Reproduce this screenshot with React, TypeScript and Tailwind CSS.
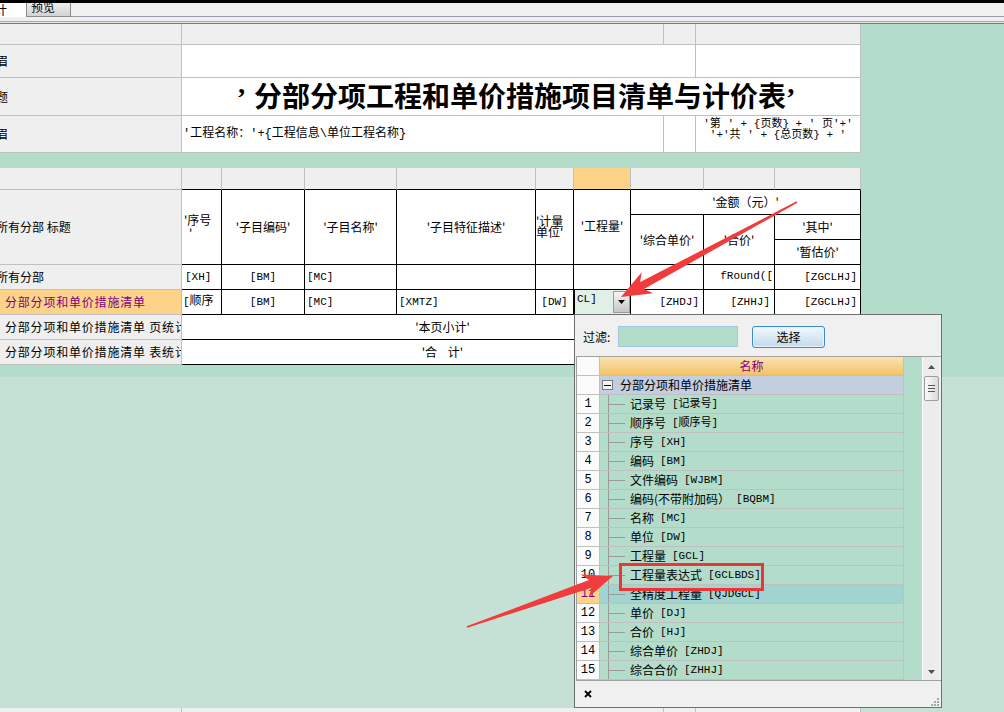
import React from "react";

const GL = "border-r border-b border-[#c0c0c0]";
const BL = "border-r border-b border-black";
const HC = "border-r border-b border-r-[#c0c0c0] border-b-black bg-[#efefef]";
const M = "font-['Liberation_Mono','Noto_Sans_CJK_SC',monospace] text-[11px]";

function arrow(tx: number, ty: number, px: number, py: number) {
  const dx = px - tx;
  const dy = py - ty;
  const L = Math.hypot(dx, dy);
  const ux = dx / L;
  const uy = dy / L;
  const nx = -uy;
  const ny = ux;
  const hl = 30;
  const hw = 12;
  const sw = 4;
  const tw = 0.8;
  const bx = px - ux * hl;
  const by = py - uy * hl;
  const p = (x: number, y: number) => `${x.toFixed(1)},${y.toFixed(1)}`;
  return [
    p(tx + nx * tw, ty + ny * tw),
    p(bx + ux * 6 + nx * sw, by + uy * 6 + ny * sw),
    p(bx + nx * hw, by + ny * hw),
    p(px, py),
    p(bx - nx * hw, by - ny * hw),
    p(bx + ux * 6 - nx * sw, by + uy * 6 - ny * sw),
    p(tx - nx * tw, ty - ny * tw),
  ].join(" ");
}

const items: [string, string][] = [
  ["记录号", "[记录号]"],
  ["顺序号", "[顺序号]"],
  ["序号", "[XH]"],
  ["编码", "[BM]"],
  ["文件编码", "[WJBM]"],
  ["编码(不带附加码）", "[BQBM]"],
  ["名称", "[MC]"],
  ["单位", "[DW]"],
  ["工程量", "[GCL]"],
  ["工程量表达式", "[GCLBDS]"],
  ["全精度工程量", "[QJDGCL]"],
  ["单价", "[DJ]"],
  ["合价", "[HJ]"],
  ["综合单价", "[ZHDJ]"],
  ["综合合价", "[ZHHJ]"],
];

function ListRow({ n, label, code }: { n: number; label: string; code: string }) {
  const sel = n === 11;
  return (
    <div className="h-[19px] flex shrink-0">
      <div
        className={`w-[23px] h-full ${GL} flex items-center justify-center ${M} text-[12px] ${
          sel ? "bg-[#fdd38a] text-[#800080]" : "bg-[#fbfbfb]"
        }`}
      >
        {n}
      </div>
      <div className={`w-[304px] h-full ${GL} flex items-center ${sel ? "bg-[#a1d3d1]" : "bg-[#b4dccb]"}`}>
        <div className="w-[8px] shrink-0" />
        <div className="w-px h-full bg-[#9a9a9a] shrink-0" />
        <div className="w-[16px] h-px bg-[#9a9a9a] shrink-0" />
        <span className="ml-[5px] whitespace-nowrap">{label}</span>
        <span className={`ml-[6px] whitespace-nowrap ${M}`}>{code}</span>
      </div>
    </div>
  );
}

export default function App() {
  return (
    <div className="relative w-[1004px] h-[712px] overflow-hidden bg-[#c5e1d5] font-['Noto_Sans_CJK_SC',sans-serif] text-[12px] leading-[14px] text-black flex flex-col">
      <div className="h-[3px] shrink-0 bg-black" />
      {/* tab strip */}
      <div className="h-[14px] shrink-0 flex bg-[#f0f0f0]">
        <div className="w-[26px] h-full bg-white overflow-hidden">
          <div className="-ml-[5px] leading-[13px]">计</div>
        </div>
        <div className="w-[45px] h-full border-x border-b border-[#8c8c8c] bg-linear-to-b from-[#efefef] to-[#d2d2d2] overflow-hidden pl-[4px]">
          <div className="-mt-[3px] leading-[14px]">预览</div>
        </div>
        <div className="flex-1 h-full border-b border-[#9c9cab]" />
      </div>
      <div className="h-[4px] shrink-0 bg-[#f0f0f0]" />
      <div className="h-px shrink-0 bg-[#a9a9a9]" />
      <div className="h-px shrink-0 bg-[#e6e6e6]" />
      <div className="h-px shrink-0 bg-[#7a7a7a]" />

      {/* design area */}
      <div className="h-[353px] shrink-0 bg-[#b4dccb] flex flex-col">
        {/* table 1 */}
        <div className="w-[861px] flex flex-col shrink-0">
          <div className="h-[21px] flex">
            <div className={`w-[182px] h-full ${GL} bg-[#efefef]`} />
            <div className={`w-[482px] h-full ${GL} bg-[#efefef]`} />
            <div className={`w-[32px] h-full ${GL} bg-[#efefef]`} />
            <div className={`w-[165px] h-full ${GL} bg-[#efefef]`} />
          </div>
          <div className="h-[33px] flex">
            <div className={`w-[182px] h-full ${GL} bg-[#efefef] flex items-center overflow-hidden`}>
              <span className="-ml-[16px] whitespace-nowrap">页眉</span>
            </div>
            <div className={`w-[514px] h-full ${GL} bg-white`} />
            <div className={`w-[165px] h-full ${GL} bg-white`} />
          </div>
          <div className="h-[38px] flex">
            <div className={`w-[182px] h-full ${GL} bg-[#efefef] flex items-center overflow-hidden`}>
              <span className="-ml-[16px] whitespace-nowrap">标题</span>
            </div>
            <div className={`w-[679px] h-full ${GL} bg-white flex items-center justify-center pr-[10px]`}>
              <span className="text-[28px] leading-[32px] font-bold whitespace-nowrap">
                <span className="font-['Liberation_Serif',serif] mr-[8px]">’</span>
                分部分项工程和单价措施项目清单与计价表
                <span className="font-['Liberation_Serif',serif]">’</span>
              </span>
            </div>
          </div>
          <div className="h-[37px] flex">
            <div className={`w-[182px] h-full ${GL} bg-[#efefef] flex items-center overflow-hidden`}>
              <span className="-ml-[16px] whitespace-nowrap">页眉</span>
            </div>
            <div className={`w-[482px] h-full ${GL} bg-white flex items-center pl-[1px]`}>
              <span className={`${M} text-[12px] whitespace-nowrap`}>{"'工程名称：'+{工程信息\\单位工程名称}"}</span>
            </div>
            <div className={`w-[32px] h-full ${GL} bg-white`} />
            <div className={`w-[165px] h-full ${GL} bg-white flex flex-col items-center pt-[3px] ${M} leading-[11px]`}>
              <span className="whitespace-nowrap">{"'第  ' + {页数} + '  页'+'"}</span>
              <span className="whitespace-nowrap">{"'+'共  ' + {总页数} + '"}</span>
            </div>
          </div>
        </div>

        <div className="h-[15px] shrink-0" />

        {/* table 2 */}
        <div className="w-[861px] flex flex-col shrink-0">
          <div className="h-[22px] flex">
            <div className={`w-[182px] h-full ${GL} bg-[#efefef]`} />
            <div className={`w-[40px] h-full ${HC}`} />
            <div className={`w-[83px] h-full ${HC}`} />
            <div className={`w-[92px] h-full ${HC}`} />
            <div className={`w-[139px] h-full ${HC}`} />
            <div className={`w-[38px] h-full ${HC}`} />
            <div className="w-[57px] h-full border-r border-b border-r-[#c0c0c0] border-b-black bg-[#fdd38a]" />
            <div className={`w-[73px] h-full ${HC}`} />
            <div className={`w-[71px] h-full ${HC}`} />
            <div className={`w-[86px] h-full ${HC}`} />
          </div>
          {/* big header */}
          <div className="h-[75px] flex">
            <div className={`w-[182px] h-full ${GL} bg-[#efefef] flex items-center overflow-hidden`}>
              <span className="-ml-[4px] whitespace-nowrap">所有分部 标题</span>
            </div>
            <div className={`w-[40px] h-full ${BL} bg-white flex flex-col justify-center pl-[2px] pb-[2px] leading-[13px]`}>
              <span className="whitespace-nowrap">'序号</span>
              <span className="pl-[5px]">'</span>
            </div>
            <div className={`w-[83px] h-full ${BL} bg-white flex items-center justify-center`}>'子目编码'</div>
            <div className={`w-[92px] h-full ${BL} bg-white flex items-center justify-center`}>'子目名称'</div>
            <div className={`w-[139px] h-full ${BL} bg-white flex items-center justify-center`}>'子目特征描述'</div>
            <div className={`w-[38px] h-full ${BL} bg-white flex flex-col justify-center pb-[2px] leading-[11px]`}>
              <span className="whitespace-nowrap">'计量</span>
              <span className="whitespace-nowrap">单位'</span>
            </div>
            <div className={`w-[57px] h-full ${BL} bg-white flex items-center justify-center pb-[2px]`}>'工程量'</div>
            <div className="w-[230px] h-full flex flex-col">
              <div className={`h-[25px] ${BL} bg-white flex items-center justify-center`}>'金额（元）'</div>
              <div className="h-[50px] flex">
                <div className={`w-[73px] h-full ${BL} bg-white flex items-center justify-center`}>'综合单价'</div>
                <div className={`w-[71px] h-full ${BL} bg-white flex items-center justify-center`}>'合价'</div>
                <div className="w-[86px] h-full flex flex-col">
                  <div className={`h-[25px] ${BL} bg-white flex items-center justify-center`}>'其中'</div>
                  <div className={`h-[25px] ${BL} bg-white flex items-center justify-center`}>'暂估价'</div>
                </div>
              </div>
            </div>
          </div>
          {/* row a */}
          <div className="h-[25px] flex">
            <div className={`w-[182px] h-full ${GL} bg-[#efefef] flex items-center overflow-hidden`}>
              <span className="-ml-[4px] whitespace-nowrap">所有分部</span>
            </div>
            <div className={`w-[40px] h-full ${BL} bg-white flex items-center pl-[3px] ${M}`}>[XH]</div>
            <div className={`w-[83px] h-full ${BL} bg-white flex items-center justify-center ${M}`}>[BM]</div>
            <div className={`w-[92px] h-full ${BL} bg-white flex items-center pl-[2px] ${M}`}>[MC]</div>
            <div className={`w-[139px] h-full ${BL} bg-white`} />
            <div className={`w-[38px] h-full ${BL} bg-white`} />
            <div className={`w-[57px] h-full ${BL} bg-white`} />
            <div className={`w-[73px] h-full ${BL} bg-white`} />
            <div className={`w-[71px] h-full ${BL} bg-white flex justify-end pt-[4px] pr-[1px] ${M} whitespace-nowrap overflow-hidden`}>fRound([</div>
            <div className={`w-[86px] h-full ${BL} bg-white flex items-center justify-end pr-[3px] ${M}`}>[ZGCLHJ]</div>
          </div>
          {/* row b */}
          <div className="h-[25px] flex">
            <div className={`w-[182px] h-full ${GL} bg-[#fdd38a] text-[#800080] flex items-center pl-[5px] overflow-hidden tracking-[0.8px] whitespace-nowrap`}>
              分部分项和单价措施清单
            </div>
            <div className={`w-[40px] h-full ${BL} bg-white pt-[3px] pl-[1px] overflow-hidden whitespace-nowrap`}>
              <span className={M}>[</span>顺序
            </div>
            <div className={`w-[83px] h-full ${BL} bg-white flex items-center justify-center ${M}`}>[BM]</div>
            <div className={`w-[92px] h-full ${BL} bg-white flex items-center pl-[2px] ${M}`}>[MC]</div>
            <div className={`w-[139px] h-full ${BL} bg-white flex items-center pl-[2px] ${M}`}>[XMTZ]</div>
            <div className={`w-[38px] h-full ${BL} bg-white flex items-center justify-center ${M}`}>[DW]</div>
            <div className={`w-[57px] h-full ${BL} bg-[#e0f0e7] shadow-[inset_1px_0_0_#000] flex items-start justify-between`}>
              <span className={`${M} pl-[3px] pt-[2px]`}>CL]</span>
              <div className="mt-px w-[17px] h-[22px] border border-[#9a9a9a] bg-linear-to-b from-[#f6f6f6] to-[#c6c6c6] flex items-center justify-center">
                <svg width="7" height="4" viewBox="0 0 7 4">
                  <path d="M0 0h7L3.5 4z" fill="#000" />
                </svg>
              </div>
            </div>
            <div className={`w-[73px] h-full ${BL} bg-white flex items-center justify-end pr-[4px] ${M}`}>[ZHDJ]</div>
            <div className={`w-[71px] h-full ${BL} bg-white flex items-center justify-end pr-[4px] ${M}`}>[ZHHJ]</div>
            <div className={`w-[86px] h-full ${BL} bg-white flex items-center justify-end pr-[3px] ${M}`}>[ZGCLHJ]</div>
          </div>
          {/* row c */}
          <div className="h-[25px] flex">
            <div className={`w-[182px] h-full ${GL} bg-[#efefef] flex items-center pl-[5px] overflow-hidden tracking-[0.8px] whitespace-nowrap`}>
              分部分项和单价措施清单 页统计
            </div>
            <div className={`w-[522px] h-full ${BL} bg-white flex items-center justify-center`}>'本页小计'</div>
            <div className={`w-[71px] h-full ${BL} bg-white`} />
            <div className={`w-[86px] h-full ${BL} bg-white`} />
          </div>
          {/* row d */}
          <div className="h-[25px] flex">
            <div className={`w-[182px] h-full ${GL} bg-[#efefef] flex items-center pl-[5px] overflow-hidden tracking-[0.8px] whitespace-nowrap`}>
              分部分项和单价措施清单 表统计
            </div>
            <div className={`w-[522px] h-full ${BL} bg-white flex items-center justify-center whitespace-pre`}>{"'合    计'"}</div>
            <div className={`w-[71px] h-full ${BL} bg-white`} />
            <div className={`w-[86px] h-full ${BL} bg-white`} />
          </div>
        </div>
      </div>

      <div className="flex-1" />

      {/* bottom strip */}
      <div className="h-[4px] shrink-0 flex">
        <div className="w-[182px] h-full border-r border-[#c0c0c0] bg-[#efefef]" />
        <div className="w-[482px] h-full border-r border-[#c0c0c0] bg-[#efefef]" />
        <div className="w-[32px] h-full border-r border-[#c0c0c0] bg-[#efefef]" />
        <div className="w-[165px] h-full border-r border-[#c0c0c0] bg-[#efefef]" />
      </div>

      {/* popup */}
      <div className="absolute left-[574px] top-[314px] w-[368px] h-[394px] border border-[#707070] bg-[#f0f0f0] flex flex-col">
        <div className="h-[41px] shrink-0 flex items-start pt-[11px] pl-[8px]">
          <div className="w-[35px] h-[22px] flex items-center whitespace-nowrap">过滤:</div>
          <div className="w-[120px] h-[21px] border border-[#a3c6e3] bg-[#b4dccb]" />
          <div className="ml-[14px] w-[73px] h-[22px] rounded-[3px] border border-[#3a8ad0] bg-linear-to-b from-[#f3f8fc] to-[#c2daee] shadow-[inset_0_0_0_1px_#e8f2fb] flex items-center justify-center">
            选择
          </div>
        </div>
        <div className="ml-px h-[325px] shrink-0 border-l border-t border-b border-[#a0a0a0] flex">
          <div className="w-[327px] flex flex-col">
            <div className="h-[19px] flex shrink-0">
              <div className={`w-[23px] h-full ${GL} bg-[#fbfbfb]`} />
              <div className={`w-[304px] h-full ${GL} bg-linear-to-b from-[#fbe3b0] to-[#f2c264] flex items-center justify-center text-[#800080]`}>
                名称
              </div>
            </div>
            <div className="h-[19px] flex shrink-0">
              <div className={`w-[23px] h-full ${GL} bg-[#fbfbfb]`} />
              <div className={`w-[304px] h-full ${GL} bg-[#c3cee0] flex items-center`}>
                <div className="ml-[2px] w-[11px] h-[10px] border border-[#7a7a7a] bg-[#f4f4f4] flex items-center justify-center shrink-0">
                  <div className="w-[7px] h-px bg-black" />
                </div>
                <span className="ml-[7px] whitespace-nowrap">分部分项和单价措施清单</span>
              </div>
            </div>
            {items.map(([label, code], i) => (
              <ListRow key={i} n={i + 1} label={label} code={code} />
            ))}
          </div>
          <div className="w-[18px] h-full bg-[#b4dccb]" />
          <div className="w-[17px] h-full bg-[#ececec] border-l border-white flex flex-col items-center">
            <div className="h-[19px] flex items-center justify-center">
              <svg width="7" height="4" viewBox="0 0 7 4">
                <path d="M0 4h7L3.5 0z" fill="#505050" />
              </svg>
            </div>
            <div className="w-[15px] h-[25px] rounded-[2px] border border-[#9c9c9c] bg-linear-to-r from-[#fbfbfb] to-[#dadada] flex flex-col items-center justify-center gap-[2px]">
              <div className="w-[7px] h-px bg-[#5a5a5a]" />
              <div className="w-[7px] h-px bg-[#5a5a5a]" />
              <div className="w-[7px] h-px bg-[#5a5a5a]" />
            </div>
            <div className="flex-1" />
            <div className="h-[17px] flex items-center justify-center">
              <svg width="7" height="4" viewBox="0 0 7 4">
                <path d="M0 0h7L3.5 4z" fill="#505050" />
              </svg>
            </div>
          </div>
        </div>
        <div className="flex-1 flex items-center justify-between pl-[9px] pr-[2px]">
          <svg width="8" height="8" viewBox="0 0 8 8">
            <path d="M1 1L7 7M7 1L1 7" stroke="#000" strokeWidth="1.8" />
          </svg>
          <svg width="9" height="9" viewBox="0 0 9 9" className="self-end mb-[1px]">
            <rect x="7" y="1" width="2" height="2" fill="#a8a8a8" />
            <rect x="4" y="4" width="2" height="2" fill="#a8a8a8" />
            <rect x="7" y="4" width="2" height="2" fill="#a8a8a8" />
            <rect x="1" y="7" width="2" height="2" fill="#a8a8a8" />
            <rect x="4" y="7" width="2" height="2" fill="#a8a8a8" />
            <rect x="7" y="7" width="2" height="2" fill="#a8a8a8" />
          </svg>
        </div>
      </div>

      {/* red highlight box */}
      <div className="absolute left-[619px] top-[563px] w-[145px] h-[28px] border-[3px] border-[#ee3535]" />

      {/* arrows */}
      <svg className="absolute left-0 top-0 pointer-events-none" width="1004" height="712" viewBox="0 0 1004 712">
        <polygon points={arrow(797, 202, 621, 297)} fill="#f03c3c" />
        <polygon points={arrow(467, 627, 613, 576)} fill="#f03c3c" />
      </svg>
    </div>
  );
}
